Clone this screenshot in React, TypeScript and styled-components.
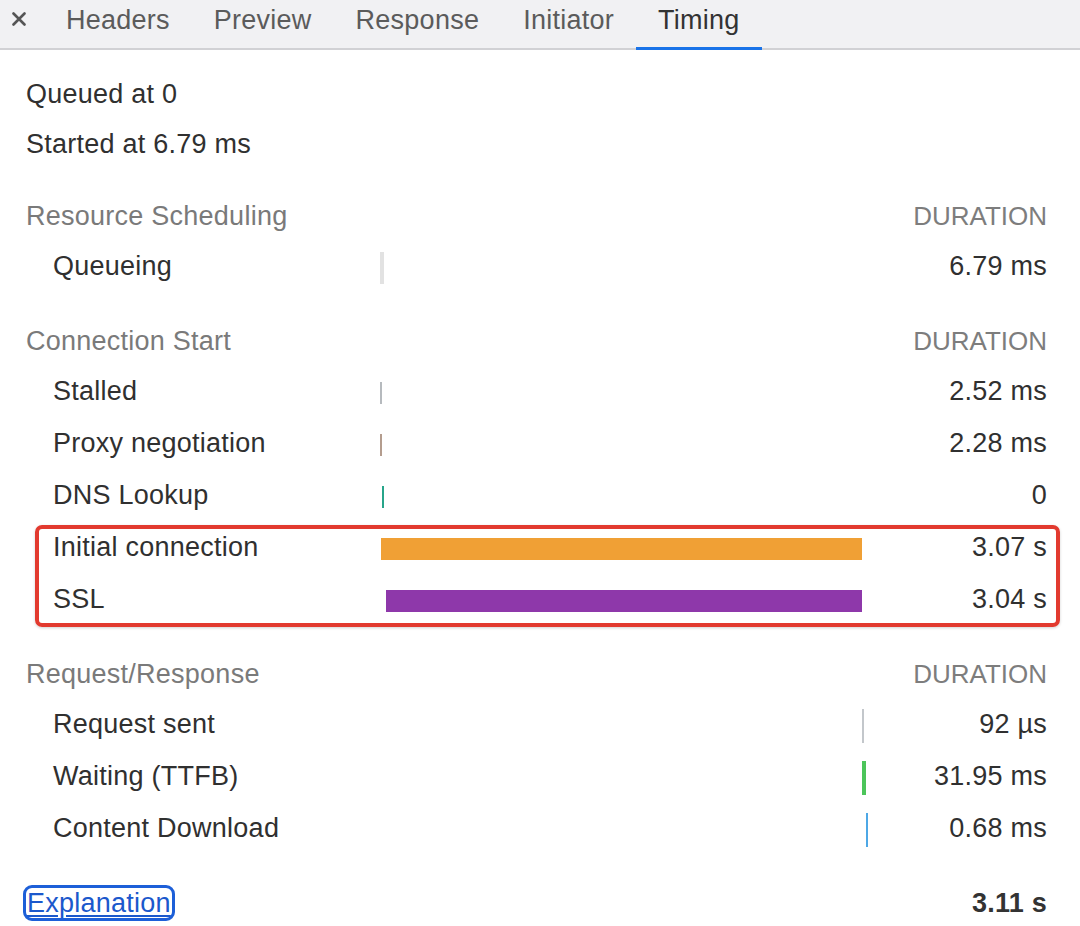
import React from 'react';
import styled, { createGlobalStyle, css } from 'styled-components';

// Network panel "Timing" tab — a tab strip, two info lines, three
// timing sections (label / waterfall bar / duration) and a footer.

const GlobalStyle = createGlobalStyle`
  html, body {
    margin: 0;
    padding: 0;
    background: #ffffff;
  }
  body {
    font-family: 'Liberation Sans', Arial, Helvetica, sans-serif;
    color: #303030;
    letter-spacing: 0.25px;
    -webkit-font-smoothing: antialiased;
  }
`;

const Page = styled.div`
  width: 1080px;
  min-height: 926px;
  background: #ffffff;
`;

const TabBar = styled.div`
  display: flex;
  align-items: stretch;
  height: 48px;
  background: #f1f1f3;
  border-bottom: 2px solid #d1d1d4;
`;

const CloseButton = styled.div`
  width: 44px;
  display: flex;
  justify-content: center;
  padding-top: 12px;
  padding-right: 6px;
  box-sizing: border-box;
  color: #555555;
`;

const Tab = styled.div<{ $active?: boolean }>`
  height: 50px;
  margin-bottom: -2px;
  padding: 6px 22px 0;
  box-sizing: border-box;
  font-size: 27px;
  line-height: 28px;
  color: #5b5b5b;
  white-space: nowrap;

  ${(p) =>
    p.$active &&
    css`
      color: #333333;
      box-shadow: inset 0 -3px 0 #1a73e8;
    `}
`;

const Content = styled.div`
  padding: 19px 33px 0 26px;
`;

const InfoLine = styled.div`
  height: 50px;
  line-height: 50px;
  font-size: 27px;
  color: #303030;
`;

const Section = styled.div<{ $gap: number }>`
  margin-top: ${(p) => p.$gap}px;
`;

const SectionHeader = styled.div`
  height: 48px;
  display: flex;
  align-items: center;
  justify-content: space-between;
  font-size: 27px;
  color: #7a7a7a;
`;

const DurationLabel = styled.span`
  font-size: 26px;
  letter-spacing: 0;
  text-transform: uppercase;
  color: #7d7d7d;
`;

const Highlight = styled.div`
  position: relative;

  &::before {
    content: '';
    position: absolute;
    left: 9px;
    right: -13px;
    top: 4px;
    bottom: -2px;
    border: 4px solid #e23a2f;
    border-radius: 7px;
    box-shadow: 0 1px 3px rgba(0, 0, 0, 0.18);
    pointer-events: none;
  }
`;

const Row = styled.div`
  height: 52px;
  display: grid;
  grid-template-columns: 354px 488px 1fr;
  align-items: center;
  font-size: 27px;
  color: #303030;
`;

const RowLabel = styled.span`
  padding-left: 27px;
  white-space: nowrap;
`;

const Track = styled.div`
  height: 100%;
  display: flex;
  align-items: center;
`;

const Bar = styled.div<{ $color: string; $height: number }>`
  flex: none;
  height: ${(p) => p.$height}px;
  background: ${(p) => p.$color};
  margin-top: 4px;
`;

const Value = styled.span`
  text-align: right;
  white-space: nowrap;
`;

const Footer = styled.div`
  margin-top: 23px;
  height: 52px;
  display: flex;
  align-items: center;
  justify-content: space-between;
  font-size: 27px;
`;

const ExplanationLink = styled.a`
  color: #1b58cc;
  text-decoration: underline;
  text-underline-offset: 3px;
  line-height: 30px;
  padding: 0 1px;
  outline: 3px solid #1d5fd8;
  border-radius: 6px;
`;

const Total = styled.span`
  font-weight: 700;
  color: #333333;
`;

type Phase = {
  label: string;
  value: string;
  left: number;
  width: number;
  color: string;
  height: number;
};

const scheduling: Phase[] = [
  { label: 'Queueing', value: '6.79 ms', left: 0, width: 4, color: '#e2e2e2', height: 32 },
];

const connection: Phase[] = [
  { label: 'Stalled', value: '2.52 ms', left: 0, width: 2, color: '#b6babe', height: 22 },
  { label: 'Proxy negotiation', value: '2.28 ms', left: 0, width: 2, color: '#b49d8e', height: 22 },
  { label: 'DNS Lookup', value: '0', left: 2, width: 2, color: '#27a58a', height: 22 },
];

const highlighted: Phase[] = [
  { label: 'Initial connection', value: '3.07 s', left: 1, width: 481, color: '#f0a035', height: 22 },
  { label: 'SSL', value: '3.04 s', left: 6, width: 476, color: '#8e38aa', height: 22 },
];

const requestResponse: Phase[] = [
  { label: 'Request sent', value: '92 µs', left: 482, width: 2, color: '#c3c7cb', height: 34 },
  { label: 'Waiting (TTFB)', value: '31.95 ms', left: 482, width: 4, color: '#4cc55a', height: 34 },
  { label: 'Content Download', value: '0.68 ms', left: 486, width: 2, color: '#4da8e6', height: 34 },
];

const PhaseRow = ({ phase }: { phase: Phase }) => (
  <Row>
    <RowLabel>{phase.label}</RowLabel>
    <Track>
      <Bar
        $color={phase.color}
        $height={phase.height}
        style={{ marginLeft: phase.left, width: phase.width }}
      />
    </Track>
    <Value>{phase.value}</Value>
  </Row>
);

const CloseIcon = () => (
  <svg width="14" height="14" viewBox="0 0 14 14">
    <path d="M1.5 1.5 L12.5 12.5 M12.5 1.5 L1.5 12.5" stroke="currentColor" strokeWidth="2.6" strokeLinecap="round" />
  </svg>
);

const tabs = ['Headers', 'Preview', 'Response', 'Initiator', 'Timing'];

export default function App() {
  return (
    <Page>
      <GlobalStyle />
      <TabBar>
        <CloseButton>
          <CloseIcon />
        </CloseButton>
        {tabs.map((t) => (
          <Tab key={t} $active={t === 'Timing'}>
            {t}
          </Tab>
        ))}
      </TabBar>

      <Content>
        <InfoLine>Queued at 0</InfoLine>
        <InfoLine>Started at 6.79 ms</InfoLine>

        <Section $gap={23}>
          <SectionHeader>
            <span>Resource Scheduling</span>
            <DurationLabel>Duration</DurationLabel>
          </SectionHeader>
          {scheduling.map((p) => (
            <PhaseRow key={p.label} phase={p} />
          ))}
        </Section>

        <Section $gap={25}>
          <SectionHeader>
            <span>Connection Start</span>
            <DurationLabel>Duration</DurationLabel>
          </SectionHeader>
          {connection.map((p) => (
            <PhaseRow key={p.label} phase={p} />
          ))}
          <Highlight>
            {highlighted.map((p) => (
              <PhaseRow key={p.label} phase={p} />
            ))}
          </Highlight>
        </Section>

        <Section $gap={25}>
          <SectionHeader>
            <span>Request/Response</span>
            <DurationLabel>Duration</DurationLabel>
          </SectionHeader>
          {requestResponse.map((p) => (
            <PhaseRow key={p.label} phase={p} />
          ))}
        </Section>

        <Footer>
          <ExplanationLink href="#">Explanation</ExplanationLink>
          <Total>3.11 s</Total>
        </Footer>
      </Content>
    </Page>
  );
}
